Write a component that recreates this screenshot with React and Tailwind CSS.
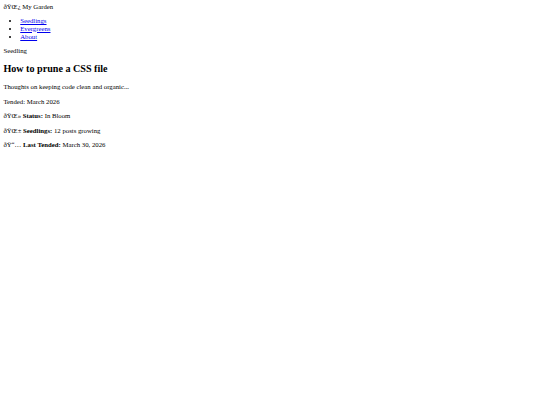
import React from 'react';

export default function App() {
  return (
    <div className="min-h-[405px] bg-white px-[3.375px] pt-[2.5px] font-['Liberation_Serif',serif] text-[6.75px] leading-[1.15] text-black">
      <header>
        <div>ðŸŒ¿ My Garden</div>
        <nav>
          <ul className="my-[1em] list-disc pl-[16.875px]">
            <li><a href="#" className="text-[#0000ee] underline">Seedlings</a></li>
            <li><a href="#" className="text-[#0000ee] underline">Evergreens</a></li>
            <li><a href="#" className="text-[#0000ee] underline">About</a></li>
          </ul>
        </nav>
      </header>
      <main>
        <article>
          <p className="my-[1em]">Seedling</p>
          <h2 className="my-[0.83em] text-[1.5em] font-bold">How to prune a CSS file</h2>
          <p className="my-[1em]">Thoughts on keeping code clean and organic...</p>
          <p className="my-[1em]">Tended: March 2026</p>
        </article>
        <section>
          <p className="my-[1em]">ðŸŒ» <strong className="font-bold">Status:</strong> In Bloom</p>
          <p className="my-[1em]">ðŸŒ± <strong className="font-bold">Seedlings:</strong> 12 posts growing</p>
          <p className="my-[1em]">ðŸ“… <strong className="font-bold">Last Tended:</strong> March 30, 2026</p>
        </section>
      </main>
    </div>
  );
}
